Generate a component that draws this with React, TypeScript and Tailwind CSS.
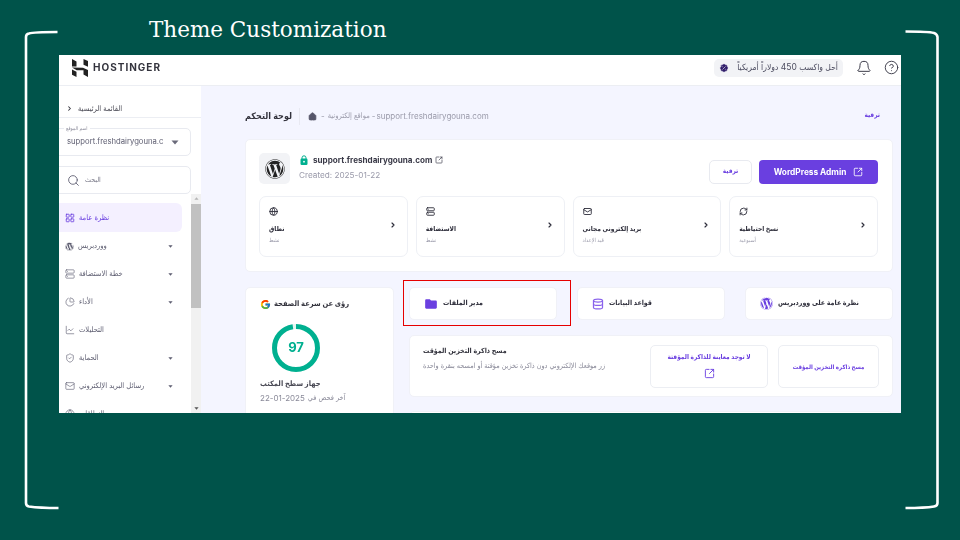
import React from "react";
import { Bell, CircleHelp, House, SquareArrowOutUpRight, Search, ChevronRight, LayoutGrid, Server, ChartPie, ShieldCheck, Mail, Globe, RefreshCw, Database, ChartLine, BadgePercent } from "lucide-react";
import { FaWordpress } from "react-icons/fa";
import { FcGoogle } from "react-icons/fc";
import { MdFolder } from "react-icons/md";

function Caret({ className = "" }: { className?: string }) {
  return (
    <svg viewBox="0 0 8 5" className={className} fill="currentColor">
      <path d="M0.5 0.5h7L4 4.5z" />
    </svg>
  );
}

function Logo() {
  return (
    <svg viewBox="0 0 16 18" className="w-[16px] h-[18px]" fill="#222">
      <path d="M0 0l4.500 2.400v5.200H0zM11.500 0L16 2v5.800l-4.500-2zM0 8.600l11 .1 5 2.400V18l-4.500-2.400v-4.300H4.700zM0 10.600l4.500 2.200V18L0 15.800z" />
    </svg>
  );
}

function GreenLock() {
  return (
    <svg viewBox="0 0 8 10" className="w-[8px] h-[10px]">
      <path d="M2 4V2.800a2 2 0 0 1 4 0V4" fill="none" stroke="#00b090" strokeWidth="1" />
      <rect x="0.500" y="3.500" width="7" height="6.500" rx="1.200" fill="#00b090" />
      <circle cx="4" cy="6.700" r="0.900" fill="#fff" />
    </svg>
  );
}

const nav = [
  { icon: Server, label: "خطة الاستضافة", caret: true },
  { icon: ChartPie, label: "الأداء", caret: true },
  { icon: ChartLine, label: "التحليلات", caret: false },
  { icon: ShieldCheck, label: "الحماية", caret: true },
  { icon: Mail, label: "رسائل البريد الإلكتروني", caret: true },
  { icon: Globe, label: "النطاقات", caret: true },
];

const tiles = [
  { icon: Globe, title: "نطاق", sub: "نشط" },
  { icon: Server, title: "الاستضافة", sub: "نشط" },
  { icon: Mail, title: "بريد إلكتروني مجاني", sub: "قيد الإعداد" },
  { icon: RefreshCw, title: "نسخ احتياطية", sub: "أسبوعية" },
];

function Sidebar() {
  return (
    <aside className="w-[142px] shrink-0 bg-white flex flex-col overflow-hidden">
      <div className="h-[32px] shrink-0 flex items-end pb-[2px] pl-[7px] gap-[5px] border-b border-[#eceef3] text-[#33333d]">
        <ChevronRight className="w-[7px] h-[7px] mb-[3px]" strokeWidth={3.500} />
        <span className="text-[7.500px] leading-[12px] text-[#4a4a55]">القائمة الرئيسية</span>
      </div>
      <div className="relative mt-[10px] ml-[-8px] w-[140px] h-[28px] shrink-0 rounded-[5px] border border-[#e8eaf0] flex items-center pl-[15px] pr-[11px] justify-between">
        <span className="absolute left-[12px] top-[-4px] bg-white px-[2px] text-[5px] leading-[7px] text-[#8a8a99]">اسم الموقع</span>
        <span className="text-[7.700px] text-[#5d5d70] whitespace-nowrap">support.freshdairygouna.c</span>
        <Caret className="w-[8px] h-[5px] text-[#6a6a7a]" />
      </div>
      <div className="mt-[10px] ml-[-8px] w-[140px] h-[28px] shrink-0 rounded-[5px] border border-[#e8eaf0] flex items-center pl-[15px] gap-[5px] text-[#5d5d70]">
        <Search className="w-[13px] h-[13px]" strokeWidth={1.6} />
        <span className="text-[7px] text-[#777786]">البحث</span>
      </div>
      <div className="flex-1 flex min-h-0">
        <div className="flex-1 min-w-0 pt-[9px] overflow-hidden">
          <div className="h-[29px] mr-[9px] bg-[#f4f0ff] rounded-r-[6px] flex items-center pl-[6px] gap-[4px] text-[#6a3fe0]">
            <LayoutGrid className="w-[10px] h-[10px]" strokeWidth={2} />
            <span className="text-[7.500px]">نظرة عامة</span>
          </div>
          <div className="h-[28px] flex items-center pl-[6px] pr-[18px] text-[#5d5d70]">
            <FaWordpress className="w-[9px] h-[9px] mr-[4px]" />
            <span className="text-[7.500px] flex-1">ووردبريس</span>
            <Caret className="w-[5px] h-[3px]" />
          </div>
          {nav.map((n) => (
            <div key={n.label} className="h-[28px] flex items-center pl-[6px] pr-[18px] text-[#5d5d70]">
              <n.icon className="w-[10px] h-[10px] mr-[4px]" strokeWidth={1.5} />
              <span className="text-[7.500px] flex-1">{n.label}</span>
              {n.caret && <Caret className="w-[5px] h-[3px]" />}
            </div>
          ))}
        </div>
        <div className="w-[10px] shrink-0 bg-[#f1f1f1] flex flex-col items-center">
          <Caret className="w-[5px] h-[3px] text-[#b5b5b5] rotate-180 my-[3px]" />
          <div className="w-full h-[104px] mt-[1px] bg-[#c1c1c1]" />
          <div className="flex-1" />
          <Caret className="w-[5px] h-[3px] text-[#555] mb-[3px]" />
        </div>
      </div>
    </aside>
  );
}

function Tile({ icon: Icon, title, sub }: { icon: React.ElementType; title: string; sub: string }) {
  return (
    <div className="h-[61px] rounded-[7px] border border-[#eef0f5] flex items-center pl-[9px] pr-[10px] justify-between">
      <div className="flex flex-col pb-[2px]">
        <Icon className="w-[9px] h-[9px] text-[#2d2d3a]" strokeWidth={2.4} />
        <span className="mt-[7px] text-[6.600px] leading-[12px] font-bold text-[#2d2d3a]">{title}</span>
        <span className="mt-[1px] text-[5.500px] leading-[8px] text-[#9b9bab]">{sub}</span>
      </div>
      <ChevronRight className="w-[8px] h-[8px] text-[#2d2d3a] mb-[3px]" strokeWidth={3.5} />
    </div>
  );
}

function QuickLink({ children, label }: { children: React.ReactNode; label: string }) {
  return (
    <div className="relative h-[33px] bg-white rounded-[5px] border border-[#f0f1f7] flex items-center pl-[14px] gap-[5px]">
      {children}
      <span className="text-[7px] font-bold text-[#2d2d3a]">{label}</span>
    </div>
  );
}

export default function App() {
  return (
    <div className="relative w-[960px] h-[540px] overflow-hidden bg-[#00534a] font-['Inter','DejaVu_Sans_Condensed','DejaVu_Sans',sans-serif]">
      <svg className="absolute left-0 top-0 w-[960px] h-[540px] pointer-events-none" viewBox="0 0 960 540" fill="none" stroke="#fff" strokeWidth="2.600">
        <path d="M57.500 32C44 32 32 32.500 29 33.500Q26 34 26 37V503Q26 506 29 506.500C36 507.500 46 508 58.500 508" />
        <path d="M905.500 31.500C918 31.500 930 32 934 33Q937 34 937.500 37V503Q937.500 506 934 506.500C928 507.500 918 508 905.500 508" />
      </svg>
      <h1 className="h-[55px] pl-[149px] pt-[14px] text-[21.500px] leading-[31px] text-white font-['DejaVu_Serif',serif]">Theme Customization</h1>
      <div className="ml-[59px] w-[842px] h-[358px] flex flex-col overflow-hidden bg-white blur-[0.4px]">
        <header className="h-[31px] shrink-0 border-b border-[#eceef3] flex items-center pl-[13px] pr-[2px] pb-[8px] pt-[3px]">
          <Logo />
          <span className="ml-[5px] text-[10px] font-bold tracking-[1px] text-[#33333d]">HOSTINGER</span>
          <div className="flex-1" />
          <div dir="rtl" className="h-[18px] w-[129px] rounded-[5px] bg-[#f2f3f6] flex items-center px-[5px] justify-between text-[#4d4d60]">
            <span className="text-[8.500px] whitespace-nowrap">أحل واكسب 450 دولاراً أمريكياً</span>
            <BadgePercent className="w-[10px] h-[10px] text-white fill-[#2f1c6a]" strokeWidth={1.5} />
          </div>
          <Bell className="ml-[13px] w-[16px] h-[16px] text-[#3a3a48]" strokeWidth={1.5} />
          <CircleHelp className="ml-[12px] w-[15px] h-[15px] text-[#3a3a48]" strokeWidth={1.5} />
        </header>
        <div className="flex-1 flex min-h-0">
          <Sidebar />
          <main className="flex-1 min-w-0 bg-[#f4f5ff] pl-[44px] pr-[8px] overflow-hidden">
            <div className="h-[53px] pt-[7px] flex items-center pr-[13px]">
              <span className="text-[9px] font-bold text-[#33333d]">لوحة التحكم</span>
              <div className="ml-[7px] w-px h-[17px] bg-[#e8e9f2]" />
              <House className="ml-[8px] w-[9px] h-[9px] text-[#55556a] fill-[#55556a]" />
              <span className="ml-[4px] text-[8px] text-[#9a9aaa]">-</span>
              <span className="ml-[3px] text-[7.500px] text-[#9a9aaa]">مواقع إلكترونية</span>
              <span className="ml-[2px] text-[8px] text-[#9a9aaa]">-</span>
              <span className="ml-[1px] text-[8px] text-[#9a9aaa]">support.freshdairygouna.com</span>
              <div className="flex-1" />
              <span className="text-[6.500px] font-bold text-[#6a3fe0]">ترقية</span>
            </div>
            <section className="h-[133px] bg-white rounded-[5px] border border-[#f0f1f7] pl-[13px] pr-[14px] pt-[13px]">
              <div className="h-[31px] flex items-end">
                <div className="w-[31px] h-[31px] rounded-[5px] bg-[#f2f3f6] flex items-center justify-center self-start">
                  <FaWordpress className="w-[20px] h-[20px] text-[#222]" />
                </div>
                <div className="ml-[9px] self-start flex flex-col pt-[1px]">
                  <div className="flex items-center h-[12px]">
                    <span className="ml-[1px]"><GreenLock /></span>
                    <span className="ml-[5px] text-[8.100px] font-bold text-[#3a3a48]">support.freshdairygouna.com</span>
                    <SquareArrowOutUpRight className="ml-[3px] w-[8px] h-[8px] text-[#3a3a48]" strokeWidth={2} />
                  </div>
                  <span className="mt-[3px] text-[8.200px] leading-[12px] text-[#9a9aaa]">Created: 2025-01-22</span>
                </div>
                <div className="flex-1" />
                <div className="w-[43px] h-[24px] rounded-[5px] border border-[#e8eaf0] flex items-center justify-center text-[6.500px] font-bold text-[#6a3fe0]">ترقية</div>
                <div className="ml-[7px] w-[119px] h-[24px] rounded-[4px] bg-[#6a3fe0] flex items-center justify-center gap-[7px] text-white">
                  <span className="text-[8.300px] font-bold">WordPress Admin</span>
                  <SquareArrowOutUpRight className="w-[10px] h-[10px]" strokeWidth={2} />
                </div>
              </div>
              <div className="mt-[12px] grid grid-cols-4 gap-[8px]">
                {tiles.map((t) => <Tile key={t.title} {...t} />)}
              </div>
            </section>
            <div className="mt-[15px] flex gap-[15px]">
              <section className="w-[149px] h-[140px] shrink-0 bg-white rounded-[5px] border border-[#f0f1f7] pl-[14px] pt-[10px]">
                <div className="flex items-center h-[12px] gap-[3px]">
                  <FcGoogle className="w-[11px] h-[11px]" />
                  <span className="text-[7.500px] font-bold text-[#33333d]">رؤى عن سرعة الصفحة</span>
                </div>
                <div className="relative mt-[14px] ml-[12px] w-[48px] h-[48px]">
                  <svg viewBox="0 0 48 48" className="w-[48px] h-[48px] -rotate-90">
                    <circle cx="24" cy="24" r="21.500" fill="none" stroke="#e3f6f1" strokeWidth="5" />
                    <circle cx="24" cy="24" r="21.500" fill="none" stroke="#00b090" strokeWidth="5" strokeDasharray="131 135" />
                  </svg>
                  <span className="absolute inset-0 flex items-center justify-center text-[13px] font-bold text-[#00b090]">97</span>
                </div>
                <div className="mt-[6px] text-[7.500px] leading-[12px] font-bold text-[#4a4a55]">جهاز سطح المكتب</div>
                <div className="mt-[2px] flex gap-[3px] items-center text-[#8a8a99] whitespace-nowrap leading-[12px]">
                  <span className="text-[8px]">22-01-2025</span>
                  <span className="text-[7.300px]">آخر فحص في</span>
                </div>
              </section>
              <div className="flex-1 min-w-0">
                <div className="grid grid-cols-3 gap-[20px]">
                  <QuickLink label="مدير الملفات">
                    <MdFolder className="w-[14px] h-[14px] text-[#6a3fe0]" />
                    <div className="absolute left-[-7px] top-[-8px] right-[-15px] bottom-[-7px] border-[1.500px] border-[#e60000]" />
                  </QuickLink>
                  <QuickLink label="قواعد البيانات">
                    <Database className="w-[12px] h-[12px] text-[#8a63ec]" strokeWidth={2.500} />
                  </QuickLink>
                  <QuickLink label="نظرة عامة على ووردبريس">
                    <FaWordpress className="w-[13px] h-[13px] text-[#6a3fe0]" />
                  </QuickLink>
                </div>
                <section className="relative mt-[15px] h-[62px] bg-white rounded-[5px] border border-[#f0f1f7] pl-[13px] pr-[13px] flex items-center">
                  <div className="flex flex-col self-start pt-[9px]">
                    <span className="text-[7px] leading-[12px] font-bold text-[#33333d]">مسح ذاكرة التخزين المؤقت</span>
                    <span className="mt-[4px] text-[7.200px] leading-[10px] text-[#8a8a99] whitespace-nowrap">زر موقعك الإلكتروني دون ذاكرة تخزين مؤقتة أو امسحه بنقرة واحدة</span>
                  </div>
                  <div className="flex-1" />
                  <div className="w-[118px] h-[43px] rounded-[5px] border border-[#eceef3] flex flex-col items-center justify-center gap-[6px] text-[#6a3fe0]">
                    <span className="text-[6.500px] font-bold">لا توجد معاينة للذاكرة المؤقتة</span>
                    <SquareArrowOutUpRight className="w-[11px] h-[11px]" strokeWidth={2} />
                  </div>
                  <div className="ml-[10px] w-[101px] h-[43px] rounded-[5px] border border-[#eceef3] flex items-center justify-center text-[6px] font-bold text-[#6a3fe0]">مسح ذاكرة التخزين المؤقت</div>
                </section>
                <section className="mt-[14px] h-[40px] bg-white rounded-[5px] border border-[#f0f1f7]" />
              </div>
            </div>
          </main>
        </div>
      </div>
    </div>
  );
}
